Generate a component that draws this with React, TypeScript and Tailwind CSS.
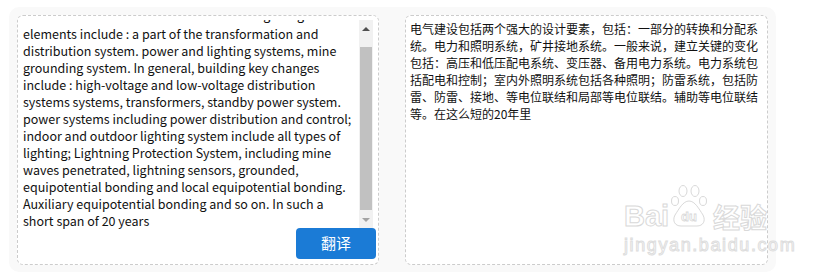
import React from "react";

const enHidden = "Electrical construction includes two strong design";
const enText =
  "elements include : a part of the transformation and distribution system. power and lighting systems, mine grounding system. In general, building key changes include : high-voltage and low-voltage distribution systems systems, transformers, standby power system. power systems including power distribution and control; indoor and outdoor lighting system include all types of lighting; Lightning Protection System, including mine waves penetrated, lightning sensors, grounded, equipotential bonding and local equipotential bonding. Auxiliary equipotential bonding and so on. In such a short span of 20 years";

const zhText =
  "电气建设包括两个强大的设计要素，包括：一部分的转换和分配系统。电力和照明系统，矿井接地系统。一般来说，建立关键的变化包括：高压和低压配电系统、变压器、备用电力系统。电力系统包括配电和控制；室内外照明系统包括各种照明；防雷系统，包括防雷、防雷、接地、等电位联结和局部等电位联结。辅助等电位联结等。在这么短的20年里";

const font = "font-['Microsoft_YaHei','Noto_Sans_CJK_SC',sans-serif]";

const Scrollbar: React.FC = () => (
  <div className="flex flex-col w-[14px] bg-[#f1f1f1]">
    <div className="h-[17px] flex items-center justify-center">
      <div className="w-0 h-0 border-l-[4px] border-r-[4px] border-b-[4px] border-l-transparent border-r-transparent border-b-[#505050]" />
    </div>
    <div className="mx-[1px] mt-[10px] h-[163px] bg-[#c1c1c1]" />
    <div className="flex-1 flex items-center justify-center">
      <div className="w-0 h-0 border-l-[4px] border-r-[4px] border-t-[4px] border-l-transparent border-r-transparent border-t-[#a3a3a3]" />
    </div>
  </div>
);

const Watermark: React.FC = () => (
  <div className="absolute left-[624px] top-[182px] w-[150px] h-[74px] pointer-events-none select-none font-['Liberation_Sans',sans-serif]">
    <div className="flex items-end h-[46px]">
      <span className="w-[43px] text-[29px] leading-none font-bold text-white [-webkit-text-stroke:1px_#d9d9d9] -mb-[3px]">Bai</span>
      <svg width="44" height="44" viewBox="0 0 40 44">
        <g fill="white" stroke="#d9d9d9" strokeWidth="1">
          <ellipse cx="14" cy="7" rx="4" ry="5.5" />
          <ellipse cx="26" cy="7" rx="4" ry="5.5" />
          <ellipse cx="6" cy="17" rx="3.5" ry="4.5" />
          <ellipse cx="34" cy="17" rx="3.5" ry="4.5" />
          <path d="M20 17c-6 0-10 8-14 14-3 6 0 11 6 11h16c6 0 9-5 6-11-4-6-8-14-14-14z" />
        </g>
        <text x="20" y="37" textAnchor="middle" fontSize="13" fontWeight="bold" fill="white" stroke="#d9d9d9" strokeWidth="0.8">du</text>
      </svg>
      <span className="ml-[2px] text-[27px] leading-none font-bold text-white [-webkit-text-stroke:1px_#d9d9d9] font-['Noto_Sans_CJK_SC',sans-serif] -mb-[2px]">经验</span>
    </div>
    <div className="mt-[8px] text-[18px] leading-none tracking-[1.6px] text-white [-webkit-text-stroke:1px_#dddddd]">
      jingyan.baidu.com
    </div>
  </div>
);

export default function App() {
  return (
    <div className={`relative w-[816px] h-[274px] bg-white ${font}`}>
      <div className="ml-[9px] pt-[7px]">
        <div className="flex gap-[26px] w-[767px] h-[265px] rounded-[10px] bg-[#f9f9f9] pt-[8px] px-[8px] pb-[7px]">
          <div className="flex flex-col w-[363px] h-[250px] border border-dashed border-[#cccccc] rounded-[6px] bg-white pl-[4px] pr-[5px] pt-[4px]">
            <div className="flex h-[209px] overflow-hidden">
              <div className="flex-1 overflow-hidden text-[12.5px] leading-[17px] text-[#111] pl-[1px] pr-[4px]">
                <div className="h-[5px] overflow-hidden">
                  <div className="-mt-[14px] whitespace-nowrap">{enHidden}</div>
                </div>
                <div>{enText}</div>
              </div>
              <Scrollbar />
            </div>
            <div className="flex justify-end -mt-[1px] -mr-[3px]">
              <button className="w-[80px] h-[31px] rounded-[4px] bg-[#1b7bd6] text-white text-[15px]">翻译</button>
            </div>
          </div>
          <div className="w-[364px] h-[250px] border border-dashed border-[#cccccc] rounded-[6px] bg-white pl-[4px] pt-[4px]">
            <div className="w-[354px] text-[12px] leading-[17px] text-[#111]">{zhText}</div>
          </div>
        </div>
      </div>
      <Watermark />
    </div>
  );
}
